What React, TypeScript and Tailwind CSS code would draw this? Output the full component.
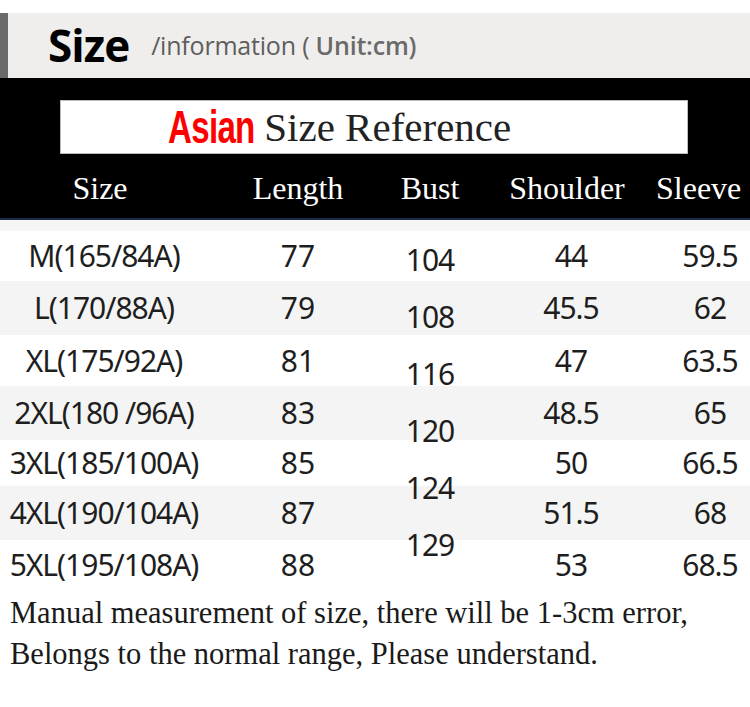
const rows = [
  { size: "M(165/84A)", length: "77", shoulder: "44", sleeve: "59.5", h: "h-[50px]", bg: "bg-white" },
  { size: "L(170/88A)", length: "79", shoulder: "45.5", sleeve: "62", h: "h-[54px]", bg: "bg-[#f4f4f4]" },
  { size: "XL(175/92A)", length: "81", shoulder: "47", sleeve: "63.5", h: "h-[51px]", bg: "bg-white" },
  { size: "2XL(180 /96A)", length: "83", shoulder: "48.5", sleeve: "65", h: "h-[54px]", bg: "bg-[#f4f4f4]" },
  { size: "3XL(185/100A)", length: "85", shoulder: "50", sleeve: "66.5", h: "h-[46px]", bg: "bg-white" },
  { size: "4XL(190/104A)", length: "87", shoulder: "51.5", sleeve: "68", h: "h-[54px]", bg: "bg-[#f4f4f4]" },
  { size: "5XL(195/108A)", length: "88", shoulder: "53", sleeve: "68.5", h: "h-[50px]", bg: "bg-white" },
]

const bust = ["104", "108", "116", "120", "124", "129"]

const cols = "grid grid-cols-[208px_180px_84px_198px_80px]"

export default function App() {
  return (
    <div className="w-[750px] h-[707px] bg-white overflow-hidden">
      {/* title bar */}
      <div className="pt-[13px]">
        <div className="flex h-[65px] bg-[#efeeec]">
          <div className="w-[8px] bg-[#6a6a6a]" />
          <div className="flex items-center pl-[40px] pb-[2px]">
            <span className="text-[44px] font-bold leading-none text-black tracking-[-1px]" style={{ fontFamily: '"Open Sans", sans-serif' }}>
              Size
            </span>
            <span className="ml-[22px] pt-[2px] text-[25px] leading-none text-[#5e5e5e] tracking-[-0.2px]" style={{ fontFamily: '"Open Sans", sans-serif' }}>
              /information ( <span className="font-semibold text-[#6a6a6a]">Unit:cm)</span>
            </span>
          </div>
        </div>
      </div>

      {/* black header */}
      <div className="bg-black h-[140px] pt-[22px]">
        <div className="mx-[60px] w-[628px] h-[54px] bg-white border border-[#bbb] flex items-center pl-[107px]">
          <span className="inline-block origin-left scale-x-[0.72] mr-[-30px] text-[46px] leading-none font-bold text-[#ff0000] tracking-[-1px]" style={{ fontFamily: '"Liberation Sans", sans-serif' }}>
            Asian
          </span>
          <span className="ml-[6px] text-[41px] leading-none text-[#222]" style={{ fontFamily: '"Liberation Serif", serif' }}>
            Size Reference
          </span>
        </div>
        <div className={`${cols} mt-[18px] text-white text-[32px] leading-none`} style={{ fontFamily: '"Liberation Serif", serif' }}>
          <div className="text-center pr-[8px]">Size</div>
          <div className="text-center">Length</div>
          <div className="text-center">Bust</div>
          <div className="text-center pr-[8px]">Shoulder</div>
          <div className="ml-[-14px] whitespace-nowrap">Sleeve</div>
        </div>
      </div>
      <div className="h-[2px] bg-[#1c2b4a]" />
      <div className="h-[11px] bg-[#f6f6f6]" />

      {/* table body */}
      <div className="grid text-[30px] leading-none text-[#1e1e1e]" style={{ fontFamily: '"Noto Sans", sans-serif' }}>
        <div className="col-start-1 row-start-1 flex flex-col">
          {rows.map((r) => (
            <div key={r.size} className={`${r.h} ${r.bg}`} />
          ))}
        </div>
        <div className={`col-start-1 row-start-1 ${cols}`}>
          <div className="flex flex-col">
            {rows.map((r) => (
              <div key={r.size} className={`${r.h} flex items-center justify-center tracking-[-1px]`}>{r.size}</div>
            ))}
          </div>
          <div className="flex flex-col">
            {rows.map((r) => (
              <div key={r.size} className={`${r.h} flex items-center justify-center`}>{r.length}</div>
            ))}
          </div>
          <div className="flex flex-col">
            {bust.map((b) => (
              <div key={b} className="h-[57px] flex items-center justify-center tracking-[-1px]">{b}</div>
            ))}
          </div>
          <div className="flex flex-col">
            {rows.map((r) => (
              <div key={r.size} className={`${r.h} flex items-center justify-center tracking-[-1px]`}>{r.shoulder}</div>
            ))}
          </div>
          <div className="flex flex-col">
            {rows.map((r) => (
              <div key={r.size} className={`${r.h} flex items-center justify-center tracking-[-1px]`}>{r.sleeve}</div>
            ))}
          </div>
        </div>
      </div>

      {/* note */}
      <div className="pl-[10px] pt-[3px] text-[30.5px] leading-[41px] text-[#1a1a1a] whitespace-nowrap" style={{ fontFamily: '"Liberation Serif", serif' }}>
        <p>Manual measurement of size, there will be 1-3cm error,</p>
        <p>Belongs to the normal range, Please understand.</p>
      </div>
    </div>
  )
}
